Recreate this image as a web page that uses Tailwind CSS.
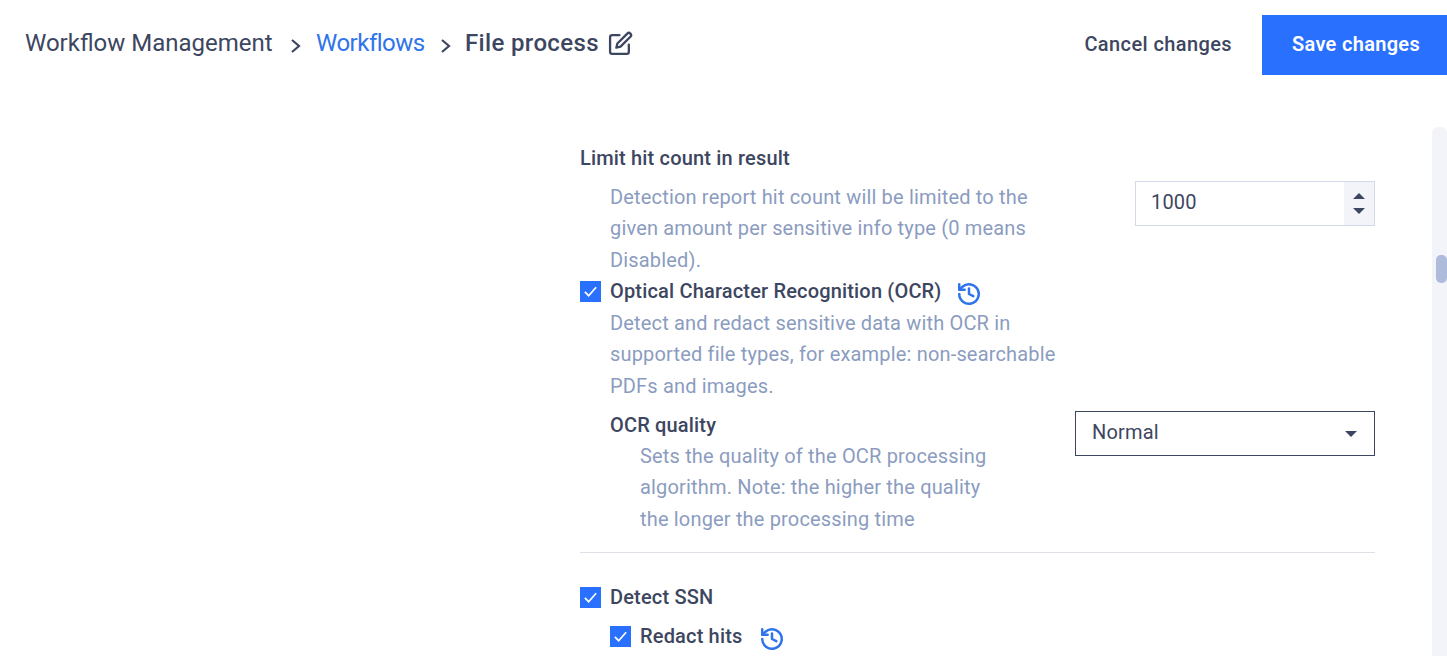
<!DOCTYPE html>
<html lang="en">
<head>
    <meta charset="UTF-8">
    <title>File process</title>
    <script src="https://cdn.jsdelivr.net/npm/@tailwindcss/browser@4"></script>
</head>
<body class="h-[656px] overflow-hidden bg-white font-['Roboto',sans-serif] text-[#3d4660]">

    <!-- header -->
    <header class="flex h-[75px] items-start justify-between">
        <nav class="flex items-center pl-[25px] pt-[26px] h-[34px] box-content text-[24px] leading-[34px]">
            <span class="w-[247px] whitespace-nowrap">Workflow Management</span>
            <svg class="ml-[18px] w-[12px] h-[16px] mt-[6px]" viewBox="0 0 12 16" fill="none" stroke="#3d4660" stroke-width="2.2"><path d="M2 2l7 6-7 6"/></svg>
            <a class="ml-[14px] w-[110px] whitespace-nowrap tracking-[-0.5px] text-[#2f74ea]">Workflows</a>
            <svg class="ml-[14px] w-[12px] h-[16px] mt-[6px]" viewBox="0 0 12 16" fill="none" stroke="#3d4660" stroke-width="2.2"><path d="M2 2l7 6-7 6"/></svg>
            <span class="ml-[13px] w-[134px] whitespace-nowrap tracking-[0.35px] font-medium">File process</span>
            <svg class="ml-[9px] w-[25px] h-[25px]" viewBox="0 0 24 24" fill="none" stroke="#3d4660" stroke-width="2.2" stroke-linecap="round" stroke-linejoin="round"><path d="M11 4H4a2 2 0 0 0-2 2v14a2 2 0 0 0 2 2h14a2 2 0 0 0 2-2v-7"/><path d="M18.5 2.5a2.1 2.1 0 0 1 3 3L12 15l-4 1 1-4z"/></svg>
        </nav>
        <div class="flex items-center h-[60px] mt-[15px]">
            <button class="mr-[30px] pb-[2px] text-[20px] tracking-[0.4px] font-medium">Cancel changes</button>
            <button class="w-[185px] h-[60px] pb-[2px] pl-[3px] bg-[#2970ff] text-white text-[20px] tracking-[0.3px] font-semibold">Save changes</button>
        </div>
    </header>

    <main class="flex">
        <div class="w-[580px] shrink-0"></div>

        <section class="w-[795px] shrink-0 pt-[68px] text-[20px] leading-[31.5px] tracking-[0.17px]">
            <h3 class="mb-[7px] font-medium">Limit hit count in result</h3>
            <div class="flex justify-between">
                <p class="pl-[30px] w-[480px] text-[#8b9cc0]">Detection report hit count will be limited to the given amount per sensitive info type (0 means Disabled).</p>
                <div class="flex w-[240px] h-[45px] -mt-[1px] border border-[#d3d9e6]">
                    <span class="flex-1 pl-[15px] leading-[41px]">1000</span>
                    <div class="flex w-[30px] flex-col items-center justify-center gap-[9px] bg-[#f2f4f9]">
                        <span class="border-x-[6px] border-b-[6px] border-x-transparent border-b-[#3d4660]"></span>
                        <span class="border-x-[6px] border-t-[6px] border-x-transparent border-t-[#3d4660]"></span>
                    </div>
                </div>
            </div>

            <div class="flex items-center gap-[9px]">
                <span class="flex w-[21px] h-[21px] items-center justify-center bg-[#2970ff]">
                    <svg class="w-[15px] h-[15px]" viewBox="0 0 16 16" fill="none" stroke="white" stroke-width="1.8"><path d="M2 8.5l4 4 8-9"/></svg>
                </span>
                <span class="font-medium">Optical Character Recognition (OCR)</span>
                <svg class="ml-[5px] mt-[5px] w-[26px] h-[26px]" viewBox="0 0 24 24" fill="none" stroke="#2f74ea" stroke-width="2.3" stroke-linecap="round" stroke-linejoin="round"><path d="M3 12a9 9 0 1 0 3-6.7L3 8"/><path d="M3 3v5h5"/><path d="M12 7v5l4 2"/></svg>
            </div>
            <p class="pl-[30px] w-[480px] text-[#8b9cc0]">Detect and redact sensitive data with OCR in supported file types, for example: non-searchable PDFs and images.</p>

            <div class="flex justify-between mt-[8px]">
                <div class="pl-[30px]">
                    <h4 class="font-medium">OCR quality</h4>
                    <p class="-mt-[1px] pl-[30px] w-[380px] text-[#8b9cc0]">Sets the quality of the OCR processing algorithm. Note: the higher the quality the longer the processing time</p>
                </div>
                <div class="flex w-[300px] h-[45px] mt-[1px] items-center justify-between border border-[#3d4660] pl-[16px] pr-[17px]">
                    <span class="-mt-[2px]">Normal</span>
                    <span class="border-x-[6px] border-t-[6px] border-x-transparent border-t-[#3d4660]"></span>
                </div>
            </div>

            <hr class="mt-[17px] border-[#dcdfe6]">

            <div class="flex items-center gap-[9px] mt-[29px]">
                <span class="flex w-[21px] h-[21px] items-center justify-center bg-[#2970ff]">
                    <svg class="w-[15px] h-[15px]" viewBox="0 0 16 16" fill="none" stroke="white" stroke-width="1.8"><path d="M2 8.5l4 4 8-9"/></svg>
                </span>
                <span class="font-medium">Detect SSN</span>
            </div>
            <div class="flex items-center gap-[9px] pl-[30px] mt-[7px]">
                <span class="flex w-[21px] h-[21px] items-center justify-center bg-[#2970ff]">
                    <svg class="w-[15px] h-[15px]" viewBox="0 0 16 16" fill="none" stroke="white" stroke-width="1.8"><path d="M2 8.5l4 4 8-9"/></svg>
                </span>
                <span class="font-medium">Redact hits</span>
                <svg class="ml-[8px] mt-[5px] w-[26px] h-[26px]" viewBox="0 0 24 24" fill="none" stroke="#2f74ea" stroke-width="2.3" stroke-linecap="round" stroke-linejoin="round"><path d="M3 12a9 9 0 1 0 3-6.7L3 8"/><path d="M3 3v5h5"/><path d="M12 7v5l4 2"/></svg>
            </div>
        </section>

        <!-- scrollbar -->
        <div class="ml-[57px] mt-[52px] h-[529px] w-[15px] rounded-t-[6px] bg-[#f2f4f9] pt-[128px] pl-[4px]">
            <div class="h-[28px] w-[11px] rounded-[5px] bg-[#aebbdb]"></div>
        </div>
    </main>

</body>
</html>
